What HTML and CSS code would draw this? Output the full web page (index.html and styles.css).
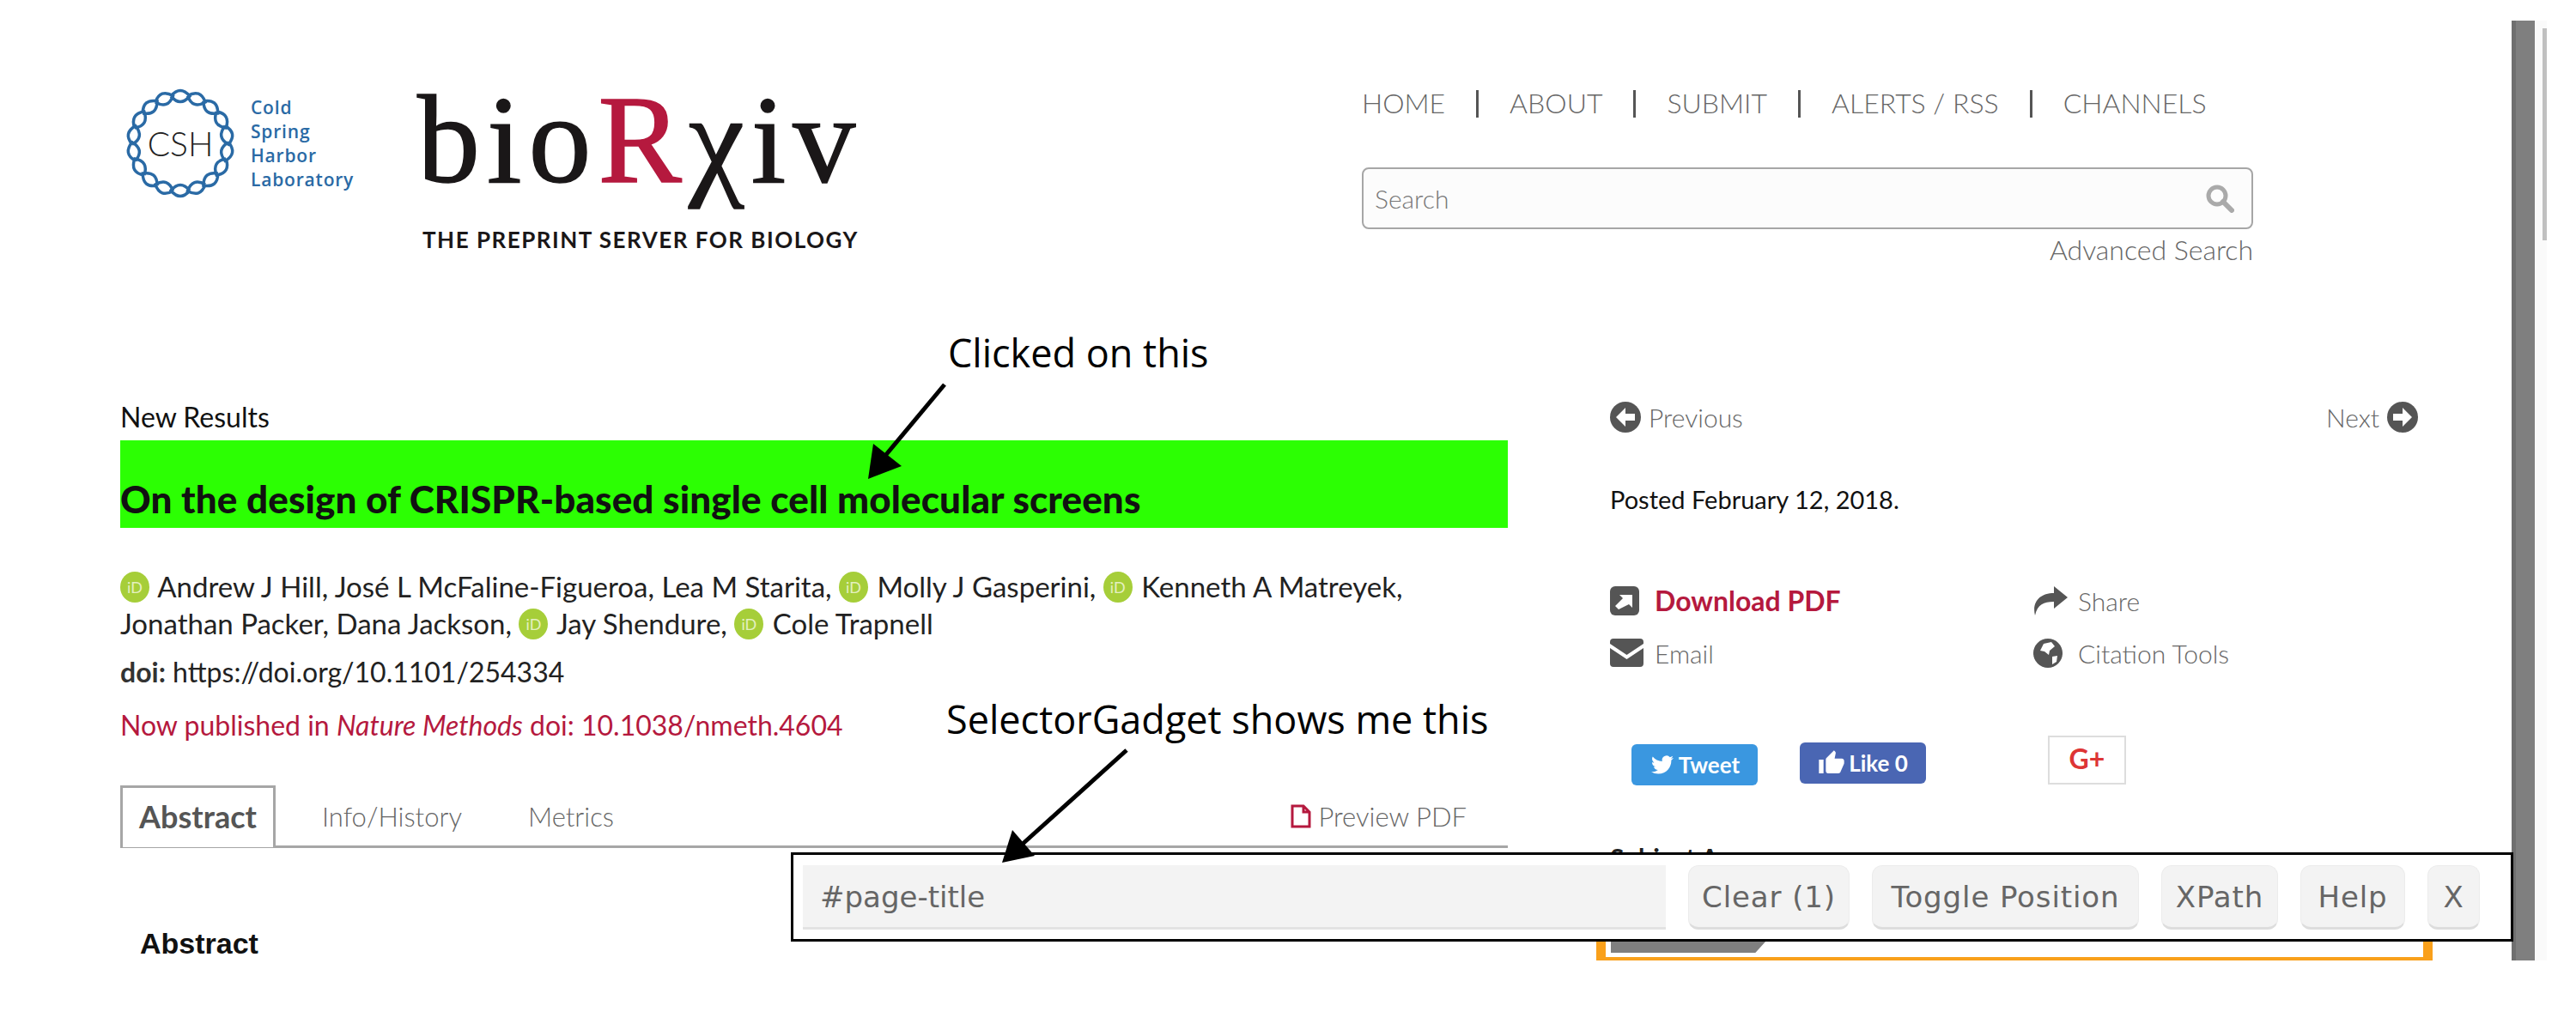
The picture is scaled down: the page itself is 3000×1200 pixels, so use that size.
FILE: index.html
```html
<!DOCTYPE html>
<html>
  <head>
    <meta charset="UTF-8">
    <title>bioRxiv - SelectorGadget</title>
    <link rel="stylesheet" href="styles.css">
  </head>
  <body>
    <div class="shot">
      <div class="page">
        <header class="site-header">
          <div class="brand">
            <svg class="csh-ring" width="130" height="130" viewBox="-65 -65 130 130">
              <defs>
                <path id="link" d="M-11 -55Q0 -68 11 -55Q0 -42 -11 -55" fill="none" stroke="#2a6aa5" stroke-width="3.500"></path>
              </defs>
              <use href="#link" transform="rotate(0)"></use>
              <use href="#link" transform="rotate(20)"></use>
              <use href="#link" transform="rotate(40)"></use>
              <use href="#link" transform="rotate(60)"></use>
              <use href="#link" transform="rotate(80)"></use>
              <use href="#link" transform="rotate(100)"></use>
              <use href="#link" transform="rotate(120)"></use>
              <use href="#link" transform="rotate(140)"></use>
              <use href="#link" transform="rotate(160)"></use>
              <use href="#link" transform="rotate(180)"></use>
              <use href="#link" transform="rotate(200)"></use>
              <use href="#link" transform="rotate(220)"></use>
              <use href="#link" transform="rotate(240)"></use>
              <use href="#link" transform="rotate(260)"></use>
              <use href="#link" transform="rotate(280)"></use>
              <use href="#link" transform="rotate(300)"></use>
              <use href="#link" transform="rotate(320)"></use>
              <use href="#link" transform="rotate(340)"></use>
              <text class="csh-mark" x="0" y="15" text-anchor="middle">CSH</text>
            </svg>
            <div class="csh-name">Cold<br>Spring<br>Harbor<br>Laboratory</div>
            <div class="biorxiv">
              <div class="biorxiv-word">bio<span class="biorxiv-r">R</span>χiv</div>
              <div class="biorxiv-tag">THE PREPRINT SERVER FOR BIOLOGY</div>
            </div>
          </div>
          <div class="header-right">
            <nav class="topnav">
              <span>HOME</span><i class="sep"></i>
              <span>ABOUT</span><i class="sep"></i>
              <span>SUBMIT</span><i class="sep"></i>
              <span>ALERTS / RSS</span><i class="sep"></i>
              <span>CHANNELS</span>
            </nav>
            <div class="search">
              <span>Search</span>
              <svg width="34" height="34" viewBox="0 0 34 34"><circle cx="14" cy="14" r="10" fill="none" stroke="#aaa" stroke-width="5"></circle><path d="M21 21l10 10" stroke="#aaa" stroke-width="6" stroke-linecap="round"></path></svg>
            </div>
            <div class="adv-search">Advanced Search</div>
          </div>
        </header>

        <main class="content">
          <section class="article">
            <div class="kind">New Results</div>
            <h1 class="page-title">On the design of CRISPR-based single cell molecular screens</h1>
            <p class="authors">
              <span class="orcid">iD</span> Andrew J Hill, José L McFaline-Figueroa, Lea M Starita, <span class="orcid">iD</span> Molly J Gasperini, <span class="orcid">iD</span> Kenneth A Matreyek,<br>
              Jonathan Packer, Dana Jackson, <span class="orcid">iD</span> Jay Shendure, <span class="orcid">iD</span> Cole Trapnell
            </p>
            <p class="doi"><b>doi:</b> https://doi.org/10.1101/254334</p>
            <p class="published">Now published in <em>Nature Methods</em> doi: 10.1038/nmeth.4604</p>
            <div class="tabs">
              <span class="tab tab-active">Abstract</span>
              <span class="tab">Info/History</span>
              <span class="tab">Metrics</span>
              <span class="tab-pdf">
                <svg width="24" height="28" viewBox="0 0 24 28"><path d="M2 2h13l7 7v17H2z M15 2v7h7" fill="none" stroke="#b5193e" stroke-width="3"></path></svg>
                Preview PDF
              </span>
            </div>
            <h2 class="abstract-title">Abstract</h2>
          </section>

          <aside class="sidebar">
            <div class="pager">
              <span class="pager-link">
                <svg width="36" height="36" viewBox="0 0 36 36"><circle cx="18" cy="18" r="18" fill="#555"></circle><path d="M18 7L7 18l11 11v-7h11v-8H18z" fill="#fff"></path></svg>
                Previous
              </span>
              <span class="pager-link">
                Next
                <svg width="36" height="36" viewBox="0 0 36 36"><circle cx="18" cy="18" r="18" fill="#555"></circle><path d="M18 7l11 11-11 11v-7H7v-8h11z" fill="#fff"></path></svg>
              </span>
            </div>
            <div class="posted">Posted February 12, 2018.</div>
            <div class="actions">
              <div class="action action-pdf">
                <span class="action-icon"><svg width="34" height="34" viewBox="0 0 34 34"><rect width="34" height="34" rx="6" fill="#555"></rect><path d="M10 27l-4-4 9-9-4-4h15v15l-4-4z" fill="#fff"></path></svg></span>
                Download PDF
              </div>
              <div class="action">
                <span class="action-icon"><svg width="40" height="34" viewBox="0 0 40 34"><path d="M24 0l16 13-16 13v-8C12 18 5 21 2 34-2 18 8 8 24 8z" fill="#555"></path></svg></span>
                Share
              </div>
              <div class="action">
                <span class="action-icon"><svg width="39" height="33" viewBox="0 0 39 33"><path d="M4 0h31a4 4 0 0 1 4 4v2L19.500 19 0 6V4a4 4 0 0 1 4-4z" fill="#555"></path><path d="M0 11l19.500 13L39 11v18a4 4 0 0 1-4 4H4a4 4 0 0 1-4-4z" fill="#555"></path></svg></span>
                Email
              </div>
              <div class="action">
                <span class="action-icon"><svg width="34" height="34" viewBox="0 0 34 34"><circle cx="17" cy="17" r="17" fill="#555"></circle><path d="M12 6l9-2 4 5-6 5-1 5-5-4-5-1zM22 21l6-1-1 7-5 3z" fill="#fff"></path></svg></span>
                Citation Tools
              </div>
            </div>
            <div class="social">
              <span class="btn-tweet">
                <svg width="30" height="26" viewBox="0 0 24 24"><path fill="#fff" d="M23.950 4.570a10 10 0 0 1-2.820.77 4.960 4.960 0 0 0 2.160-2.720c-.95.55-2 .96-3.120 1.190a4.920 4.920 0 0 0-8.380 4.480C7.690 8.100 4.070 6.130 1.640 3.160a4.820 4.820 0 0 0-.67 2.480c0 1.710.87 3.210 2.190 4.100a4.900 4.900 0 0 1-2.230-.62v.06a4.920 4.920 0 0 0 3.950 4.830 5 5 0 0 1-2.210.08 4.940 4.940 0 0 0 4.600 3.420A9.870 9.870 0 0 1 0 19.540a14 14 0 0 0 7.560 2.210c9.050 0 14-7.500 14-13.980 0-.21 0-.42-.02-.63a9.940 9.940 0 0 0 2.460-2.550z"></path></svg>
                Tweet
              </span>
              <span class="btn-like">
                <svg width="32" height="32" viewBox="0 0 24 24"><path fill="#fff" d="M1 21h4V9H1v12zm22-11c0-1.100-.9-2-2-2h-6.310l.95-4.570.03-.32c0-.41-.17-.79-.44-1.060L14.170 1 7.590 7.590C7.220 7.950 7 8.450 7 9v10c0 1.100.9 2 2 2h9c.83 0 1.540-.5 1.840-1.220l3.020-7.050c.09-.23.140-.47.140-.73v-2z"></path></svg>
                Like 0
              </span>
              <span class="btn-gplus">G+</span>
            </div>
            <div class="subject">Subject Area</div>
            <div class="subject-box"><div class="subject-tab"></div></div>
          </aside>
        </main>
      </div>
      <div class="scroll-gutter">
        <div class="scroll-track"><div class="scroll-thumb"></div></div>
      </div>
    </div>

    <!-- selector gadget toolbar sits on top of the page -->
    <div class="gadget">
      <div class="gadget-input">#page-title</div>
      <span class="gadget-btn btn-clear">Clear (1)</span>
      <span class="gadget-btn btn-toggle">Toggle Position</span>
      <span class="gadget-btn btn-xpath">XPath</span>
      <span class="gadget-btn btn-help">Help</span>
      <span class="gadget-btn btn-close">X</span>
    </div>

    <!-- hand added notes -->
    <div class="note note-click">Clicked on this</div>
    <div class="note note-gadget">SelectorGadget shows me this</div>
    <svg class="arrows" width="3000" height="1200" viewBox="0 0 3000 1200">
      <path d="M1100 448L1030 532" stroke="#000" stroke-width="5"></path>
      <path d="M1011 558L1017 517L1050 543z" fill="#000"></path>
      <path d="M1312 874L1190 984" stroke="#000" stroke-width="5"></path>
      <path d="M1167 1005L1179 967L1205 997z" fill="#000"></path>
    </svg>
  </body>
</html>
```

FILE: styles.css
```css
body {
  margin: 0;
  width: 3000px;
  height: 1200px;
  overflow: hidden;
  position: relative;
  background-color: #fff;
  font-family: Lato, "Open Sans", sans-serif;
  color: #111;
}

.shot {
  display: flex;
  height: 1119px;
  overflow: hidden;
}

.page {
  flex: 0 0 2925px;
  padding-left: 140px;
  box-sizing: border-box;
}

/* header */
.site-header {
  display: flex;
  height: 468px;
}

.brand {
  display: flex;
  flex: 0 0 1446px;
  align-items: flex-start;
  padding-top: 102px;
  box-sizing: border-box;
}

.csh-ring {
  margin-left: 5px;
}

.csh-mark {
  font-family: Lato, sans-serif;
  font-weight: 300;
  font-size: 39px;
  fill: #222;
}

.csh-name {
  margin-left: 17px;
  margin-top: 9px;
  width: 196px;
  font-family: "Open Sans", sans-serif;
  font-size: 21px;
  line-height: 28px;
  font-weight: 600;
  color: #2a6aa5;
  letter-spacing: 0.8px;
}

.biorxiv-word {
  font-family: "Liberation Serif", serif;
  font-size: 146px;
  line-height: 150px;
  letter-spacing: 8px;
  color: #1a1718;
  -webkit-text-stroke: 1.5px currentColor;
  margin-top: -14px;
  margin-left: -2px;
}

.biorxiv-r {
  color: #b5193e;
}

.biorxiv-tag {
  margin-top: 26px;
  margin-left: 4px;
  font-size: 26px;
  font-weight: 700;
  line-height: 30px;
  color: #1a1718;
  letter-spacing: 1.5px;
  white-space: nowrap;
}

.header-right {
  width: 1038px;
  padding-top: 99px;
}

.topnav {
  display: flex;
  align-items: center;
  height: 40px;
  font-size: 32px;
  font-weight: 300;
  color: #666;
  white-space: nowrap;
}

.sep {
  width: 3px;
  height: 32px;
  margin: 4px 36px 0;
  background-color: #555;
}

.search {
  display: flex;
  justify-content: space-between;
  align-items: center;
  height: 72px;
  margin-top: 56px;
  padding: 0 20px 0 13px;
  box-sizing: border-box;
  border: 2px solid #a6a6a6;
  border-radius: 8px;
  background-color: #fcfcfc;
  font-size: 30px;
  font-weight: 300;
  color: #777;
}

.adv-search {
  margin-top: 6px;
  text-align: right;
  font-size: 32px;
  line-height: 36px;
  font-weight: 300;
  color: #666;
}

/* main columns */
.content {
  display: flex;
}

.article {
  flex: 0 0 1616px;
}

.kind {
  font-size: 32px;
  line-height: 36px;
}

.page-title {
  height: 102px;
  margin: 9px 0 0;
  padding-top: 43px;
  box-sizing: border-box;
  background-color: #2cff03;
  font-size: 44px;
  line-height: 50px;
  letter-spacing: 0.1px;
  font-weight: 900;
  color: #111;
  white-space: nowrap;
}

.authors {
  margin: 47px 0 0;
  font-size: 33px;
  line-height: 43px;
  color: #222;
  white-space: nowrap;
}

.orcid {
  display: inline-flex;
  justify-content: center;
  align-items: center;
  width: 34px;
  height: 36px;
  margin-right: 2px;
  border-radius: 50%;
  background-color: #a6ce39;
  color: #e4f0c0;
  font-size: 18px;
  line-height: 36px;
  vertical-align: 5px;
}

.doi {
  margin: 17px 0 0;
  font-size: 32px;
  line-height: 36px;
  color: #222;
}

.doi b {
  color: #333;
}

.published {
  margin: 26px 0 0;
  font-size: 32px;
  line-height: 36px;
  color: #b5193e;
}

.tabs {
  display: flex;
  align-items: center;
  height: 72px;
  margin-top: 53px;
  box-sizing: border-box;
  border-bottom: 3px solid #a6a6a6;
  font-size: 31px;
  font-weight: 300;
  color: #666;
}

.tab {
  margin-right: 77px;
}

.tab-active {
  width: 181px;
  height: 72px;
  margin-right: 54px;
  box-sizing: border-box;
  border: 3px solid #a6a6a6;
  border-bottom: none;
  background-color: #fff;
  text-align: center;
  font-size: 36px;
  font-weight: 700;
  line-height: 66px;
  color: #555;
}

.tab-pdf {
  display: flex;
  align-items: center;
  gap: 8px;
  margin-left: auto;
  margin-right: 48px;
}

.abstract-title {
  margin: 91px 0 0 23px;
  font-family: "Liberation Sans", sans-serif;
  font-size: 34px;
  line-height: 40px;
  font-weight: 700;
}

/* right column */
.sidebar {
  flex: 0 0 941px;
  min-width: 0;
  margin-left: 119px;
}

.pager {
  display: flex;
  justify-content: space-between;
  height: 36px;
}

.pager-link {
  display: flex;
  align-items: center;
  gap: 9px;
  font-size: 30px;
  font-weight: 300;
  color: #666;
}

.posted {
  margin-top: 61px;
  font-size: 29px;
  line-height: 34px;
}

.actions {
  display: grid;
  grid-template-columns: 493px 1fr;
  grid-auto-rows: 61px;
  margin-top: 84px;
  font-size: 30px;
  font-weight: 300;
  color: #666;
}

.action {
  display: flex;
  align-items: flex-start;
  line-height: 34px;
}

.action-icon {
  flex: 0 0 52px;
  height: 34px;
}

.action-pdf {
  font-size: 32px;
  font-weight: 700;
  color: #b5193e;
}

.social {
  display: flex;
  align-items: flex-start;
  margin-top: 52px;
  color: #fff;
  font-size: 26px;
  font-weight: 700;
}

.btn-tweet,
.btn-like {
  display: flex;
  align-items: center;
  justify-content: center;
  gap: 4px;
  width: 147px;
  height: 48px;
  border-radius: 6px;
}

.btn-tweet {
  margin: 10px 0 0 25px;
  background-color: #3a97e0;
}

.btn-like {
  margin: 8px 0 0 49px;
  background-color: #4a66b3;
}

.btn-gplus {
  width: 91px;
  height: 57px;
  margin-left: 142px;
  box-sizing: border-box;
  border: 2px solid #ddd;
  color: #dd3535;
  text-align: center;
  line-height: 50px;
  font-size: 32px;
}

.subject {
  margin-top: 66px;
  font-size: 30px;
  line-height: 36px;
  font-weight: 700;
  color: #222;
}

.subject-box {
  display: flex;
  align-items: flex-end;
  width: 974px;
  height: 103px;
  margin-left: -16px;
  padding: 0 0 5px 6px;
  box-sizing: border-box;
  border: solid #f9a01b;
  border-width: 6px 11px 5px;
}

.subject-tab {
  width: 181px;
  height: 14px;
  background-color: #7f7f7f;
  clip-path: polygon(0 0, 100% 0, 93% 100%, 0 100%);
}

/* fake browser scrollbar */
.scroll-gutter {
  flex: 0 0 41px;
  display: flex;
  margin-top: 24px;
  box-sizing: border-box;
  border-left: 5px solid #6f6f6f;
}

.scroll-gutter::before {
  content: "";
  flex: 0 0 22px;
  background-color: #7f7f7f;
}

.scroll-track {
  flex: 1;
  display: flex;
  justify-content: flex-end;
  background-color: #fafafa;
}

.scroll-thumb {
  width: 5px;
  height: 247px;
  margin-top: 9px;
  background-color: #c0c0c0;
}

/* overlays */
.gadget {
  position: absolute;
  left: 921px;
  top: 993px;
  display: flex;
  gap: 26px;
  width: 2006px;
  height: 104px;
  padding: 12px 0 0 11px;
  box-sizing: border-box;
  border: 3px solid #000;
  background-color: #fff;
  font-family: "DejaVu Sans", sans-serif;
  font-size: 34px;
  color: #666;
}

.gadget-input {
  width: 1005px;
  height: 75px;
  padding-left: 20px;
  box-sizing: border-box;
  background-color: #f3f3f3;
  border-bottom: 3px solid #e3e3e3;
  line-height: 74px;
}

.gadget-btn {
  height: 75px;
  box-sizing: border-box;
  background-color: #f3f3f3;
  border: 1px solid #ececec;
  border-bottom: 3px solid #ddd;
  border-radius: 12px;
  text-align: center;
  line-height: 72px;
  letter-spacing: 0.9px;
}

.btn-clear { width: 188px; }
.btn-toggle { width: 311px; }
.btn-xpath { width: 136px; }
.btn-help { width: 122px; }
.btn-close { width: 61px; }

.note {
  position: absolute;
  font-family: "Open Sans", sans-serif;
  font-size: 45px;
  line-height: 60px;
  color: #000;
  white-space: nowrap;
}

.note-click {
  left: 1104px;
  top: 381px;
}

.note-gadget {
  left: 1102px;
  top: 808px;
}

.arrows {
  position: absolute;
  left: 0;
  top: 0;
}
```
